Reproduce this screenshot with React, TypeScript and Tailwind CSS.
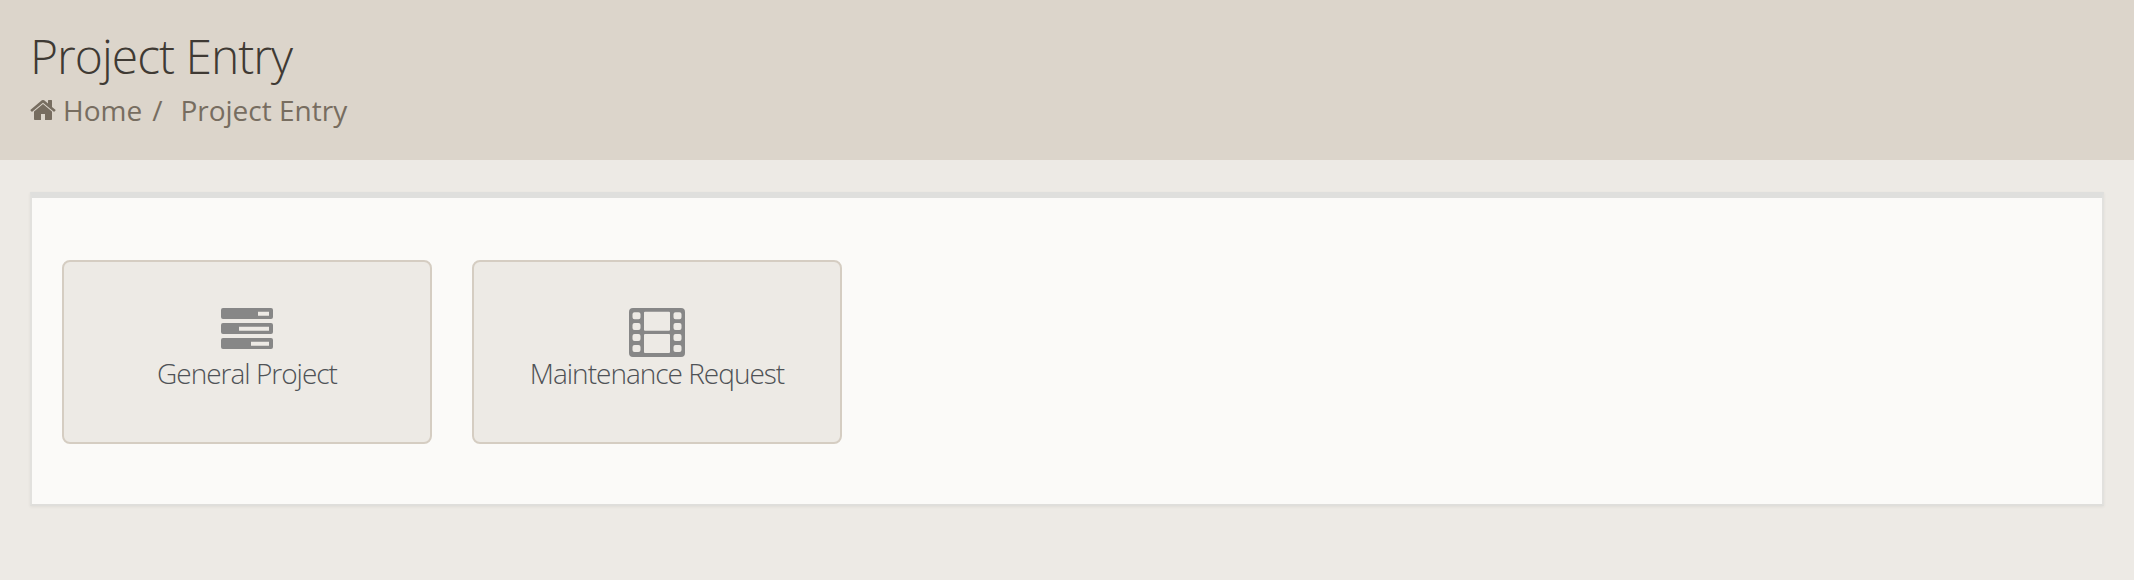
export default function App() {
  const font = { fontFamily: '"Open Sans", sans-serif' };
  return (
    <div className="min-h-[580px] bg-[#edeae5]" style={font}>
      <header className="h-[160px] bg-[#dcd5cb] px-[30px] pt-[23px]">
        <h1 className="text-[48px] leading-[66px] font-light tracking-[-1px] text-[#3f3a34]">Project Entry</h1>
        <div className="mt-[2px] flex items-center text-[28px] leading-[38px] text-[#776d60]">
          <svg viewBox="0 0 1792 1792" className="w-[28px] h-[28px] mr-[5px] fill-[#776d60]">
            <path d="M1408 992v480q0 26-19 45t-45 19h-384v-384h-256v384h-384q-26 0-45-19t-19-45v-480q0-1 .5-3t.5-3l575-474 575 474q1 2 1 6zm223-69l-62 74q-8 9-21 11h-3q-13 0-21-7l-692-577-692 577q-12 8-24 7-13-2-21-11l-62-74q-8-10-7-23.5t11-21.5l719-599q32-26 76-26t76 26l244 204v-195q0-14 9-23t23-9h192q14 0 23 9t9 23v408l219 182q10 8 11 21.5t-7 23.5z" />
          </svg>
          <span>Home</span>
          <span className="ml-[10px] mr-[18px]">/</span>
          <span>Project Entry</span>
        </div>
      </header>
      <main className="px-[30px] pt-[32px]">
        <section className="h-[314px] border-x-2 border-t-[6px] border-b-2 border-x-[#e2e1de] border-t-[#dfdfdd] border-b-[#dfdedb] bg-[#fbfaf8] px-[30px] pt-[62px] shadow-[0_1px_3px_rgba(0,0,0,0.06)]">
          <div className="flex gap-[40px]">
            <div className="w-[370px] h-[184px] rounded-[8px] border-2 border-[#d5cdc2] bg-[#edeae5] flex flex-col items-center pt-[46px]">
              <svg viewBox="0 0 52 41" className="w-[52px] h-[41px] block">
                <path fillRule="evenodd" fill="#878787" d="M2 0h48a2 2 0 0 1 2 2v7a2 2 0 0 1-2 2H2a2 2 0 0 1-2-2V2a2 2 0 0 1 2-2zM37 3.700v4h11v-4zM2 15h48a2 2 0 0 1 2 2v7a2 2 0 0 1-2 2H2a2 2 0 0 1-2-2v-7a2 2 0 0 1 2-2zM18 18.700v4h30v-4zM2 30h48a2 2 0 0 1 2 2v7a2 2 0 0 1-2 2H2a2 2 0 0 1-2-2v-7a2 2 0 0 1 2-2zM30 33.700v4h18v-4z" />
              </svg>
              <span className="mt-[5px] text-[28px] leading-[38px] font-light tracking-[-1px] text-[#4f5256]">General Project</span>
            </div>
            <div className="w-[370px] h-[184px] rounded-[8px] border-2 border-[#d5cdc2] bg-[#edeae5] flex flex-col items-center pt-[46px]">
              <svg viewBox="0 0 56 49" className="w-[56px] h-[49px] block -mb-[8px]">
                <path fillRule="evenodd" fill="#878787" d="M4 0h48a4 4 0 0 1 4 4v41a4 4 0 0 1-4 4H4a4 4 0 0 1-4-4V4a4 4 0 0 1 4-4zM5.500 4.300a2 2 0 0 0-2 2v3a2 2 0 0 0 2 2h4a2 2 0 0 0 2-2v-3a2 2 0 0 0-2-2zM5.500 15a2 2 0 0 0-2 2v3a2 2 0 0 0 2 2h4a2 2 0 0 0 2-2v-3a2 2 0 0 0-2-2zM5.500 26a2 2 0 0 0-2 2v3a2 2 0 0 0 2 2h4a2 2 0 0 0 2-2v-3a2 2 0 0 0-2-2zM5.500 37a2 2 0 0 0-2 2v3a2 2 0 0 0 2 2h4a2 2 0 0 0 2-2v-3a2 2 0 0 0-2-2zM46.500 4.300a2 2 0 0 0-2 2v3a2 2 0 0 0 2 2h4a2 2 0 0 0 2-2v-3a2 2 0 0 0-2-2zM46.500 15a2 2 0 0 0-2 2v3a2 2 0 0 0 2 2h4a2 2 0 0 0 2-2v-3a2 2 0 0 0-2-2zM46.500 26a2 2 0 0 0-2 2v3a2 2 0 0 0 2 2h4a2 2 0 0 0 2-2v-3a2 2 0 0 0-2-2zM46.500 37a2 2 0 0 0-2 2v3a2 2 0 0 0 2 2h4a2 2 0 0 0 2-2v-3a2 2 0 0 0-2-2zM16 3.700a1 1 0 0 0-1 1v17a1 1 0 0 0 1 1h24a1 1 0 0 0 1-1v-17a1 1 0 0 0-1-1zM16 26a1 1 0 0 0-1 1v17a1 1 0 0 0 1 1h24a1 1 0 0 0 1-1v-17a1 1 0 0 0-1-1z" />
              </svg>
              <span className="mt-[5px] text-[28px] leading-[38px] font-light tracking-[-1px] text-[#4f5256]">Maintenance Request</span>
            </div>
          </div>
        </section>
      </main>
    </div>
  );
}
